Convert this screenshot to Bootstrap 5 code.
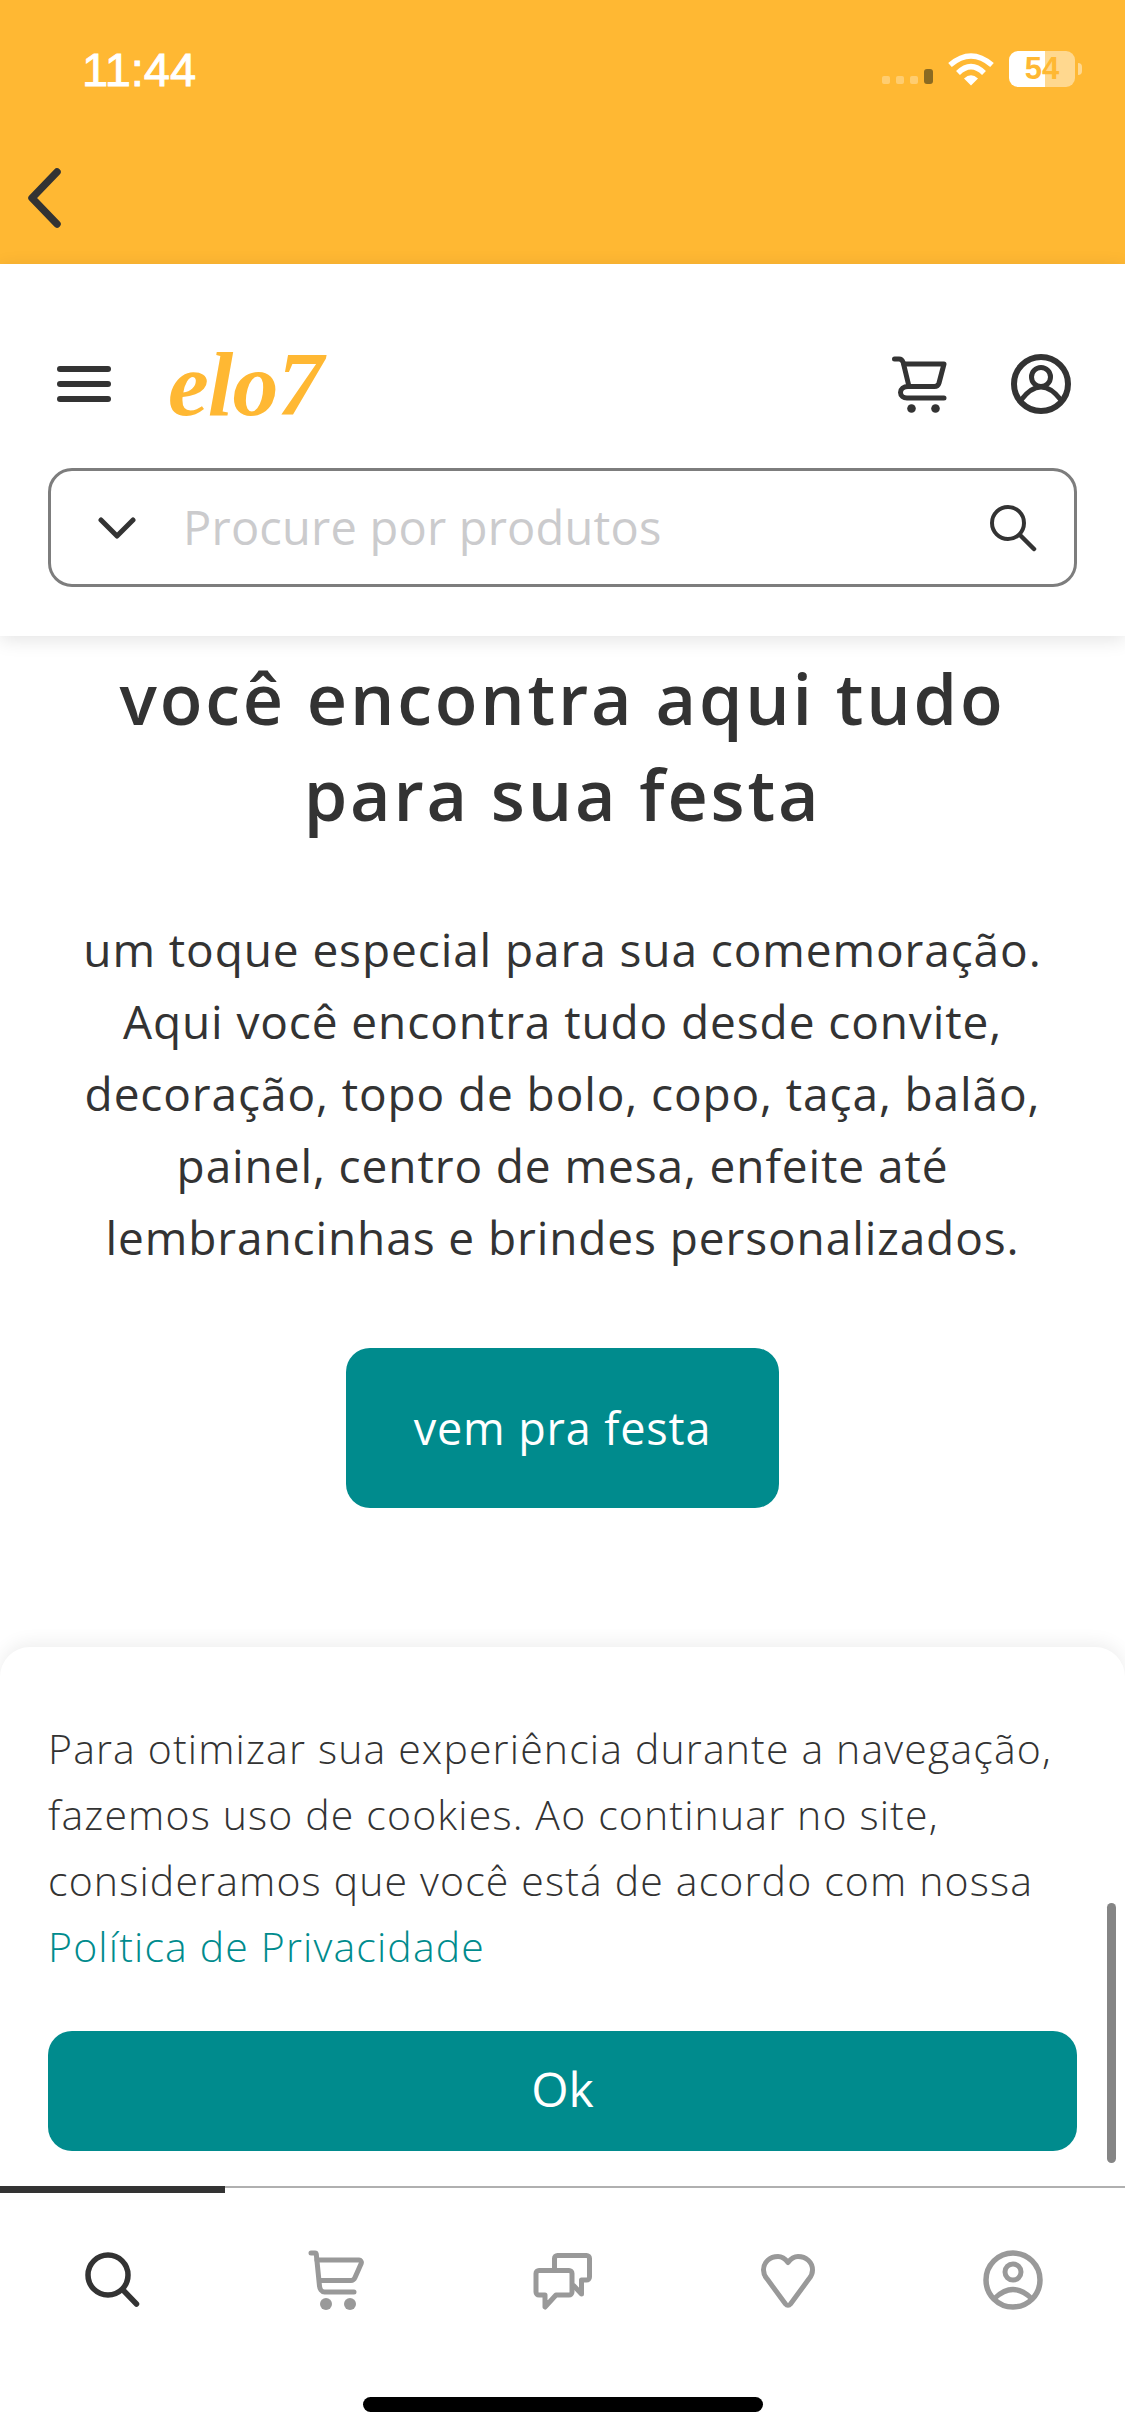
<!DOCTYPE html>
<html lang="pt-BR">
<head>
<meta charset="utf-8">
<title>elo7</title>
<link href="https://cdn.jsdelivr.net/npm/bootstrap@5.3.0/dist/css/bootstrap.min.css" rel="stylesheet">
<style>
:root{--amber:#ffb833;--teal:#008b8d;--ink:#333;--mute:#999}
html,body{margin:0;background:#fff}
body{font-family:"Open Sans",Lato,sans-serif;color:var(--ink)}
.screen{width:1125px;height:2436px;overflow:hidden}
.topbar{background:var(--amber);height:264px;flex:none;padding:0 50px 0 28px}
.clock{font:400 47px/1 "Liberation Sans",Arial,sans-serif;-webkit-text-stroke:.9px #fff;color:#fff;padding-left:54px;height:46px;margin-top:46px}
.stat{position:absolute;top:51px;left:882px;height:36px}
.sig{width:8px;height:8px;border-radius:2px;background:rgba(255,255,255,.3);margin-right:6px;align-self:flex-end;margin-bottom:3px}
.sig-on{width:9px;height:15px;border-radius:3px;background:#8a6a22;margin-right:15px;align-self:flex-end;margin-bottom:3px}
.batt{width:66px;height:36px;border-radius:9px;background:linear-gradient(90deg,#fff 55%,rgba(255,255,255,.45) 55%);color:var(--amber);font:700 31px/36px "Liberation Sans",Arial,sans-serif;text-align:center;margin-left:15px}
.nub{width:4px;height:12px;background:rgba(255,255,255,.45);border-radius:0 4px 4px 0;margin:12px 0 0 3px}
.back{margin-top:76px;display:block}
.head{height:372px;flex:none;background:#fff;padding:88px 48px 0;box-shadow:0 4px 18px rgba(0,0,0,.11);position:relative;z-index:2}
.head-row{height:64px;padding-left:9px}
.burger{width:54px;height:36px;margin-right:57px}
.burger i{display:block;height:6px;border-radius:3px;background:var(--ink)}
.brand{font:italic 700 92px/64px "Liberation Serif",serif;color:var(--amber);letter-spacing:-1px;text-decoration:none}
.finder{height:119px;margin-top:52px;border:3px solid #7d7d7d;border-radius:24px;padding:0 37px 0 47px}
.finder span{font-size:47px;letter-spacing:.2px;color:#cbcbcd;margin-left:47px}
.story{flex:1 1 0;min-height:0;background:#fff;padding-top:14px;text-align:center}
.title{font-size:70px;font-weight:600;line-height:96px;letter-spacing:2.8px;margin:0 0 71px;color:var(--ink)}
.copy{font-size:46px;letter-spacing:.9px;line-height:72px;margin:0 0 75px;color:var(--ink)}
.party{width:433px;height:160px;background:var(--teal);color:#fff;font-size:45px;letter-spacing:.85px;border-radius:24px;border:0}
.party:hover,.ok:hover{background:var(--teal);color:#fff}
.sheet{height:539px;flex:none;background:#fff;border-radius:30px 30px 0 0;padding:68px 48px 0;box-shadow:0 -4px 18px rgba(0,0,0,.07);position:relative;z-index:1}
.notice{font-size:41px;font-weight:300;line-height:66px;letter-spacing:1.15px;margin:0 0 52px;color:var(--ink)}
.notice a{color:var(--teal);text-decoration:none}
.ok{height:120px;background:var(--teal);color:#fff;font-size:48px;border-radius:24px;border:0;padding-bottom:10px}
.thumb{position:absolute;left:1107px;top:1903px;width:9px;height:260px;border-radius:5px;background:#858585;z-index:3}
.tabs{height:250px;flex:none;background:#fff;border-top:2px solid #b0b0b0;position:relative;z-index:2}
.active-mark{position:absolute;top:-2px;left:0;width:225px;height:7px;background:var(--ink)}
.tab{width:225px;padding-top:62px}
.tab svg{display:block;margin:0 auto}
.home{width:400px;height:15px;border-radius:8px;background:#000;margin:0 auto 24px}
</style>
</head>
<body>
<div class="screen d-flex flex-column position-relative">
  <div class="topbar">
    <div class="clock">11:44</div>
    <svg class="back" width="36" height="60" viewBox="0 0 36 60" fill="none" stroke="#333" stroke-width="7.5" stroke-linecap="round" stroke-linejoin="round"><path d="M29 4 4 30l25 26"/></svg>
  </div>
  <div class="stat d-flex">
    <div class="sig"></div><div class="sig"></div><div class="sig"></div><div class="sig-on"></div>
    <svg width="46" height="36" viewBox="0 0 46 36" fill="none" stroke="#fff" stroke-width="5.5"><path d="M2 14Q23-4 44 14"/><path d="M10 22Q23 9 36 22"/><path d="M16 27.500Q23 21 30 27.500L23 34.500Z" fill="#fff" stroke="none"/></svg>
    <div class="batt">54</div><div class="nub"></div>
  </div>

  <header class="head">
    <div class="head-row d-flex align-items-center">
      <div class="burger d-flex flex-column justify-content-between"><i></i><i></i><i></i></div>
      <a class="brand" href="#">elo7</a>
      <div class="ms-auto d-flex align-items-center">
        <svg width="60" height="60" viewBox="0 0 60 60" fill="none" stroke="#333" stroke-width="5" stroke-linecap="round" stroke-linejoin="round"><path d="M3.500 5H8c2 0 3.500 1.500 4.200 3.500L18 32.500"/><path d="M13 10H53l-5 19c-.6 2-2.500 3.500-4.500 3.500H17c-4.500 0-7.500 2.500-7.500 6s3 5.500 6.500 5.500H53"/><circle cx="20.500" cy="54.500" r="4.300" fill="#333" stroke="none"/><circle cx="44.500" cy="54.500" r="4.300" fill="#333" stroke="none"/></svg>
        <svg class="user-a" width="60" height="60" viewBox="0 0 60 60" fill="none" stroke="#333" stroke-width="6" style="margin-left:60px;margin-right:6px"><circle cx="30" cy="30" r="27"/><circle cx="30" cy="23" r="9.500" stroke-width="5"/><path d="M10 46Q30 20 50 46" stroke-width="5"/></svg>
      </div>
    </div>
    <div class="finder d-flex align-items-center">
      <svg width="38" height="22" viewBox="0 0 38 22" fill="none" stroke="#333" stroke-width="5" stroke-linecap="round" stroke-linejoin="round"><path d="M3 3l16 16L35 3"/></svg>
      <span>Procure por produtos</span>
      <svg class="ms-auto" width="48" height="48" viewBox="0 0 48 48" fill="none" stroke="#333" stroke-width="4" stroke-linecap="round"><circle cx="19" cy="19" r="16"/><path d="M31 31l14 14" stroke-width="4.500"/></svg>
    </div>
  </header>

  <main class="story">
    <h1 class="title">você encontra aqui tudo<br>para sua festa</h1>
    <p class="copy">um toque especial para sua comemoração.<br>Aqui você encontra tudo desde convite,<br>decoração, topo de bolo, copo, taça, balão,<br>painel, centro de mesa, enfeite até<br>lembrancinhas e brindes personalizados.</p>
    <a class="party btn d-inline-flex align-items-center justify-content-center" href="#">vem pra festa</a>
  </main>

  <section class="sheet">
    <p class="notice">Para otimizar sua experiência durante a navegação, fazemos uso de cookies. Ao continuar no site, consideramos que você está de acordo com nossa <a href="#">Política de Privacidade</a></p>
    <button class="ok btn w-100" type="button">Ok</button>
  </section>

  <div class="thumb"></div>

  <nav class="tabs d-flex flex-column">
    <div class="active-mark"></div>
    <div class="d-flex">
      <div class="tab"><svg width="60" height="60" viewBox="0 0 60 60" fill="none" stroke="#333" stroke-width="5.500" stroke-linecap="round"><circle cx="25" cy="25" r="20"/><path d="M40.500 40.500 53.500 54"/></svg></div>
      <div class="tab"><svg width="60" height="60" viewBox="0 0 60 60" fill="none" stroke="#999" stroke-width="5" stroke-linecap="round" stroke-linejoin="round"><path d="M3 3H7c.8 0 1.200.5 1.300 1.200L11.500 36c.3 3 2 6 5 6H46"/><path d="M9 10H51a2.500 2.500 0 0 1 2.300 3.300L47 27.500c-.8 1.800-2 3-4 3H12"/><circle cx="18" cy="54" r="6" fill="#999" stroke="none"/><circle cx="42" cy="54" r="6" fill="#999" stroke="none"/></svg></div>
      <div class="tab"><svg width="60" height="60" viewBox="0 0 60 60" fill="none" stroke="#999" stroke-width="5" stroke-linecap="round" stroke-linejoin="round"><path d="M6 20.500H36a3 3 0 0 1 3 3V42a3 3 0 0 1-3 3H23L12 57V45H6a3 3 0 0 1-3-3V23.500a3 3 0 0 1 3-3z"/><path d="M21.500 18V8.500a3 3 0 0 1 3-3H53.500a3 3 0 0 1 3 3V27a3 3 0 0 1-3 3H48.500V44L41 36"/></svg></div>
      <div class="tab"><svg width="60" height="60" viewBox="0 0 60 60" fill="none" stroke="#999" stroke-width="5" stroke-linejoin="round"><path d="M30 12.500c-3-4-6-6-10-6C12 6.500 5.500 12 5.500 20c0 4 1.500 6.500 3.500 8.800L27.500 54c1.500 1.800 3.500 1.800 5 0L51 28.800c2-2.300 3.500-4.800 3.500-8.800 0-8-6.500-13.500-14.500-13.500-4 0-7 2-10 6z"/></svg></div>
      <div class="tab"><svg width="60" height="60" viewBox="0 0 60 60" fill="none" stroke="#999" stroke-width="5.500"><circle cx="30" cy="30" r="27"/><circle cx="30" cy="22" r="8" stroke-width="5"/><path d="M12 48Q30 31 48 48" stroke-width="5"/></svg></div>
    </div>
    <div class="home mt-auto"></div>
  </nav>
</div>
<script src="https://cdn.jsdelivr.net/npm/bootstrap@5.3.0/dist/js/bootstrap.bundle.min.js"></script>
</body>
</html>
